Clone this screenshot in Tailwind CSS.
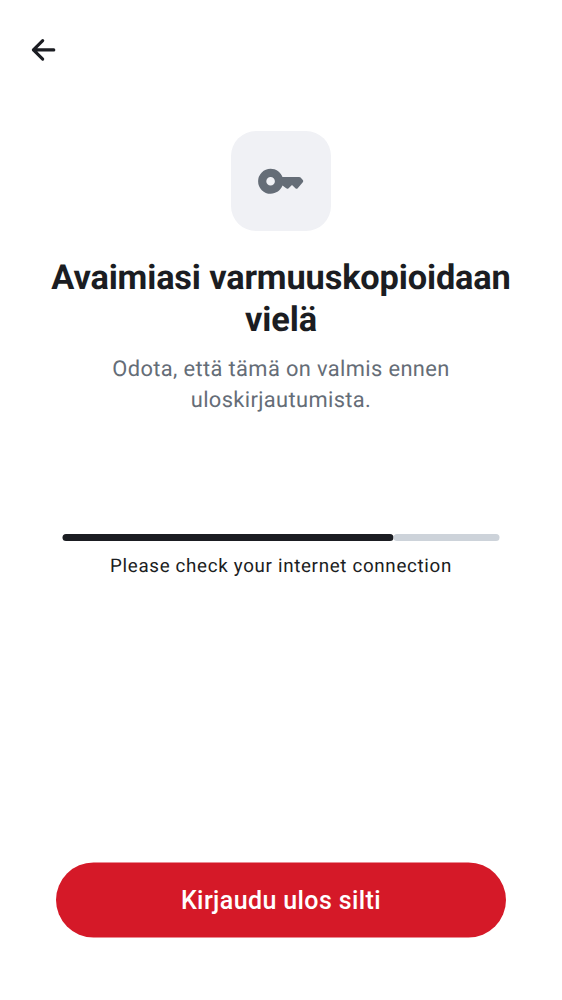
<!DOCTYPE html>
<html lang="fi">
<head>
<meta charset="utf-8">
<script src="https://cdn.jsdelivr.net/npm/@tailwindcss/browser@4"></script>
</head>
<body class="bg-white">
<main class="flex h-[1000px] w-[562px] flex-col items-center overflow-hidden bg-white font-[Roboto,sans-serif] text-[#1b1d22] [text-rendering:geometricPrecision]">
  <header class="flex h-[100px] w-full items-center pl-6">
    <svg class="size-[40px]" viewBox="0 0 40 40" fill="none" stroke="currentColor" stroke-width="3.1" stroke-linecap="round" stroke-linejoin="round"><path d="M18.7 10.6 9.4 19.9 18.7 29.2M9.4 19.9H29.8"/></svg>
  </header>
  <div class="mt-[31px] flex size-[100px] shrink-0 items-center justify-center rounded-[25px] bg-[#f0f1f5] text-[#656d77]">
    <svg class="size-[50px]" viewBox="0 0 50 50" fill="currentColor"><path fill-rule="evenodd" d="M14.6 12.8C20 12.8 24.7 16.2 26.5 21H43.2Q44 21 44.6 21.6L46.8 24.1Q47.8 25.2 46.8 26.3L41.7 32.2Q40.6 33.3 39.4 32.2L36 29.1 32.6 32.2Q31.5 33.2 30.2 32.3L26.5 29.6C24.7 34.4 20 37.8 14.6 37.8A12.5 12.5 0 0 1 14.6 12.8ZM14.6 21A4.3 4.3 0 1 0 14.6 29.6A4.3 4.3 0 1 0 14.6 21Z"/></svg>
  </div>
  <h1 class="mt-[26px] text-center text-[34.375px] leading-[42px] font-bold tracking-[-0.15px]">Avaimiasi varmuuskopioidaan<br>vielä</h1>
  <p class="mt-[13px] text-center text-[21.875px] leading-[31px] tracking-[0.37px] text-[#656d77]">Odota, että tämä on valmis ennen<br>uloskirjautumista.</p>
  <div class="mt-[118px] flex h-[7px] w-[437px] -translate-x-[0.5px]"><div class="h-full w-[331px] rounded-full bg-[#1b1d22]"></div><div class="h-full flex-1 rounded-full bg-[#cdd3da]"></div></div>
  <p class="mt-[13px] text-[18.75px] leading-[25px] tracking-[0.68px]">Please check your internet connection</p>
  <button class="mt-auto mb-[63px] h-[75px] w-[450px] shrink-0 translate-y-[0.5px] rounded-full bg-[#d51928] text-[25px] font-medium tracking-[0.39px] text-white">Kirjaudu ulos silti</button>
</main>
</body>
</html>
